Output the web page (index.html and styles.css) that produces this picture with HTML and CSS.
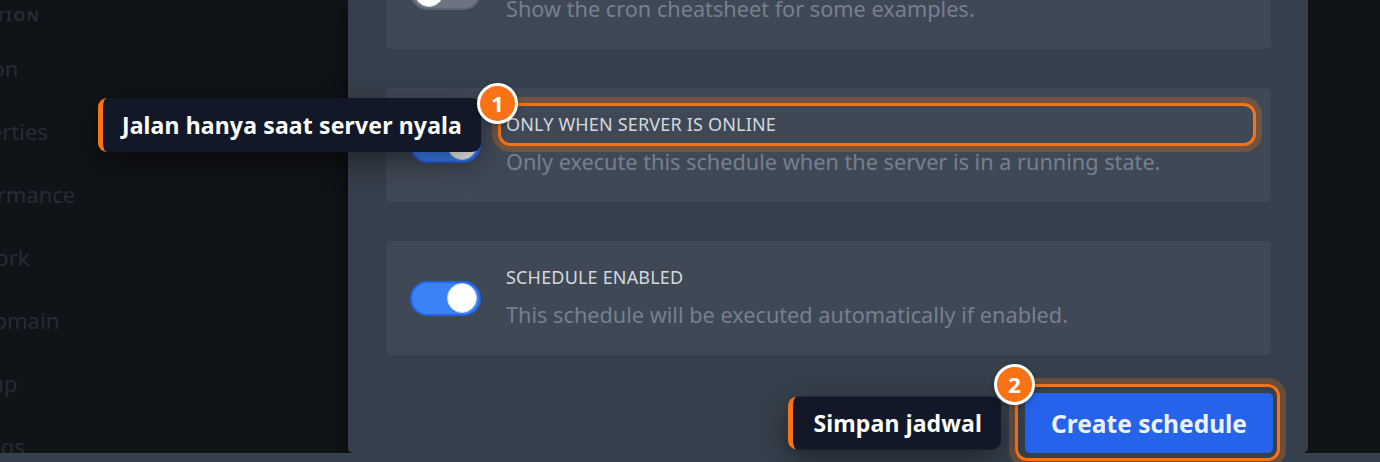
FILE: index.html
```html
<!DOCTYPE html>
<html lang="en">
<head>
<meta charset="utf-8">
<title>Create schedule</title>
<link rel="stylesheet" href="styles.css">
</head>
<body>
<div class="screen">
  <aside class="sidebar">
    <div class="sidebar-inner">
      <div class="side-header">LOCATION</div>
      <div class="side-item">Version</div>
      <div class="side-item">Properties</div>
      <div class="side-item">Performance</div>
      <div class="side-item">Network</div>
      <div class="side-item">Subdomain</div>
      <div class="side-item">Startup</div>
      <div class="side-item">Settings</div>
    </div>
  </aside>
  <main class="modal">
    <div class="modal-body">
      <div class="card card-first">
        <div class="toggle toggle-off"><span class="knob"></span></div>
        <div class="card-text">
          <div class="label">Show cheatsheet</div>
          <div class="desc">Show the cron cheatsheet for some examples.</div>
        </div>
      </div>
      <div class="card">
        <div class="toggle toggle-on"><span class="knob"></span></div>
        <div class="card-text">
          <div class="label has-spot">Only when server is online
            <div class="spot spot-label">
              <span class="badge">1</span>
              <div class="tip">Jalan hanya saat server nyala</div>
            </div>
          </div>
          <div class="desc">Only execute this schedule when the server is in a running state.</div>
        </div>
      </div>
      <div class="card">
        <div class="toggle toggle-on"><span class="knob"></span></div>
        <div class="card-text">
          <div class="label">Schedule enabled</div>
          <div class="desc">This schedule will be executed automatically if enabled.</div>
        </div>
      </div>
      <div class="actions">
        <button class="btn-primary has-spot">Create schedule
          <span class="spot spot-button">
            <span class="badge">2</span>
            <span class="tip">Simpan jadwal</span>
          </span>
        </button>
      </div>
    </div>
  </main>
  <div class="right-gutter"></div>
</div>
<div class="bottom-strip"></div>
</body>
</html>
```
FILE: styles.css
```css
* { box-sizing: border-box; }

html, body {
  margin: 0;
  padding: 0;
}

body {
  width: 1380px;
  height: 462px;
  overflow: hidden;
  background: #101317;
  font-family: "Noto Sans", "Open Sans", sans-serif;
  display: flex;
  flex-direction: column;
}

.screen {
  height: 453px;
  display: flex;
  flex: none;
}

.sidebar {
  width: 348px;
  flex: none;
  overflow: hidden;
  background: #101317;
}

.sidebar-inner {
  margin-left: -59px;
  padding-top: 5px;
}

.side-header {
  height: 20px;
  line-height: 20px;
  font-size: 15px;
  font-weight: 700;
  letter-spacing: 1.5px;
  color: #272c33;
  margin-bottom: 12px;
  margin-left: 10px;
  white-space: nowrap;
}

.side-item {
  height: 63px;
  line-height: 63px;
  font-size: 22px;
  color: #272c33;
  white-space: nowrap;
}

.modal {
  width: 960px;
  flex: none;
  background: #36404c;
  border-radius: 0 0 5px 5px;
  box-shadow: 0 10px 25px rgba(0, 0, 0, 0.4);
}

.modal-body {
  margin-top: -65px;
  padding: 0 37px 0 38px;
  display: flex;
  flex-direction: column;
  gap: 39px;
}

.card {
  background: #3f4956;
  border-radius: 5px;
  padding: 24px;
  display: flex;
  align-items: center;
}

.toggle {
  width: 71px;
  height: 35px;
  border-radius: 18px;
  flex: none;
  position: relative;
  display: flex;
  align-items: center;
  padding: 0 2px;
}

.toggle-on {
  background: #3b82f6;
  border: 2px solid #2563eb;
  justify-content: flex-end;
}

.toggle-off {
  background: #6b7480;
  border: 2px solid #5d6672;
  justify-content: flex-start;
}

.knob {
  width: 30px;
  height: 30px;
  border-radius: 50%;
  background: #ffffff;
  border: 1px solid #d1d5db;
}

.card-text {
  margin-left: 25px;
  flex: 1;
  min-width: 0;
}

.label {
  font-size: 18px;
  line-height: 24px;
  color: #d3d8de;
  text-transform: uppercase;
  letter-spacing: 0.01em;
  white-space: nowrap;
}

.desc {
  margin-top: 10px;
  font-size: 21.7px;
  line-height: 32px;
  color: #76808d;
  white-space: nowrap;
}

.actions {
  display: flex;
  justify-content: flex-end;
  margin-right: -2px;
  margin-top: -1px;
}

.btn-primary {
  font-family: inherit;
  font-size: 24.5px;
  font-weight: 700;
  color: #eef2ff;
  background: #2563eb;
  border: none;
  border-radius: 5px;
  height: 60px;
  padding: 0 26px;
  cursor: pointer;
}

.has-spot {
  position: relative;
}

.spot {
  position: absolute;
  border: 3px solid #f97316;
  border-radius: 12px;
  box-shadow: 0 0 0 6px rgba(249, 115, 22, 0.27);
  z-index: 5;
}

.spot-label {
  top: -9px;
  bottom: -10px;
  left: -8px;
  right: -9px;
}

.spot-button {
  top: -9px;
  bottom: -8px;
  left: -10px;
  right: -7px;
}

.badge {
  position: absolute;
  left: -24px;
  top: -23px;
  width: 41px;
  height: 41px;
  border-radius: 50%;
  background: #f97316;
  border: 3px solid #ffffff;
  color: #ffffff;
  font-size: 22px;
  font-weight: 700;
  line-height: 35px;
  text-align: center;
  letter-spacing: 0;
  z-index: 3;
  box-shadow: 0 2px 6px rgba(0, 0, 0, 0.3);
}

.tip {
  position: absolute;
  top: 50%;
  transform: translateY(-50%);
  right: calc(100% + 20px);
  height: 54px;
  line-height: 54px;
  padding: 0 19px;
  background: #121827;
  border-left: 5px solid #f97316;
  border-radius: 9px;
  color: #ffffff;
  font-size: 23px;
  font-weight: 700;
  text-transform: none;
  letter-spacing: 0.15px;
  white-space: nowrap;
  box-shadow: 0 10px 30px rgba(0, 0, 0, 0.45);
  z-index: 2;
}

.spot-button .tip {
  right: calc(100% + 17px);
  height: 53px;
  line-height: 53px;
  padding: 0 19px 0 20px;
  display: block;
}

.right-gutter {
  flex: 1;
  background: #101317;
}

.bottom-strip {
  height: 9px;
  flex: none;
  background: #36414e;
}
```
